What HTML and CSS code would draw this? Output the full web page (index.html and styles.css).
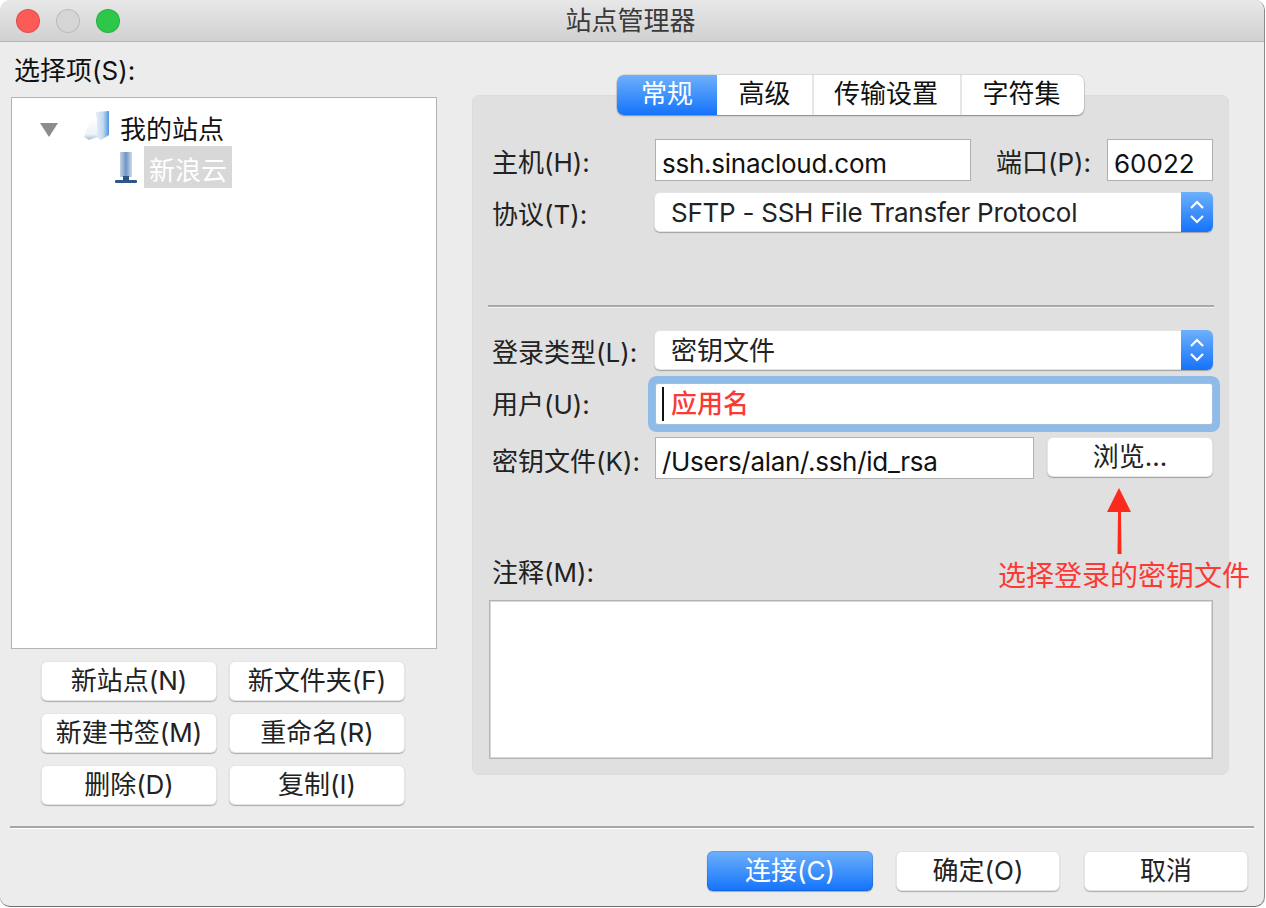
FILE: index.html
```html
<!DOCTYPE html>
<html lang="zh-CN">
<head>
<meta charset="utf-8">
<title>站点管理器</title>
<link rel="stylesheet" href="styles.css">
</head>
<body>
<div class="window">
  <header class="titlebar">
    <div class="lights"><i class="light red"></i><i class="light grey"></i><i class="light green"></i></div>
    <div class="title">站点管理器</div>
  </header>
  <div class="content">
    <section class="left">
      <div class="select-label">选择项(S):</div>
      <div class="tree">
        <div class="tree-row root">
          <svg class="twist" width="18" height="14" viewBox="0 0 18 14"><path d="M0 0H18L9 14Z" fill="#8c8c8c"/></svg>
          <svg class="folder" width="30" height="32" viewBox="0 0 30 32">
            <defs>
              <linearGradient id="fg" x1="0" y1="0" x2="1" y2="0"><stop offset="0" stop-color="#e6eff8"/><stop offset=".55" stop-color="#c3d9f0"/><stop offset="1" stop-color="#4f94dc"/></linearGradient>
              <linearGradient id="ff" x1="0" y1="0" x2="0" y2="1"><stop offset="0" stop-color="#ffffff"/><stop offset=".75" stop-color="#eef3f8"/><stop offset="1" stop-color="#a9bccf"/></linearGradient>
              <filter id="soft" x="-20%" y="-20%" width="140%" height="140%"><feGaussianBlur stdDeviation=".7"/></filter>
            </defs>
            <g filter="url(#soft)">
              <path d="M14 2 27 1V25L19 30 14 27Z" fill="url(#fg)"/>
              <path d="M2 27 8 10 15 7V27L7 30Z" fill="url(#ff)"/>
            </g>
          </svg>
          <span class="node">我的站点</span>
        </div>
        <div class="tree-row child">
          <svg class="server" width="24" height="34" viewBox="0 0 24 34">
            <defs>
              <linearGradient id="sg" x1="0" y1="0" x2="1" y2="0"><stop offset="0" stop-color="#c4d3e6"/><stop offset=".5" stop-color="#6f95c4"/><stop offset="1" stop-color="#d0dcea"/></linearGradient>
              <filter id="soft2" x="-20%" y="-20%" width="140%" height="140%"><feGaussianBlur stdDeviation=".6"/></filter>
            </defs>
            <g filter="url(#soft2)">
              <rect x="6" y="1" width="12" height="25" fill="url(#sg)"/>
              <rect x="9" y="25" width="6" height="4" fill="#2f5384"/>
              <rect x="1" y="29" width="22" height="3" rx="1" fill="#2f5788"/>
            </g>
          </svg>
          <span class="node selected">新浪云</span>
        </div>
      </div>
      <div class="tree-actions">
        <button class="btn">新站点(N)</button>
        <button class="btn">新文件夹(F)</button>
        <button class="btn">新建书签(M)</button>
        <button class="btn">重命名(R)</button>
        <button class="btn">删除(D)</button>
        <button class="btn">复制(I)</button>
      </div>
    </section>
    <section class="panel">
      <nav class="tabs">
        <div class="tab tab-active">常规</div>
        <div class="tab tab-2">高级</div>
        <div class="tab tab-3">传输设置</div>
        <div class="tab tab-4">字符集</div>
      </nav>
      <div class="row row-host">
        <label class="field-label">主机(H):</label>
        <div class="input host">ssh.sinacloud.com</div>
        <label class="port-label">端口(P):</label>
        <div class="input port">60022</div>
      </div>
      <div class="row row-proto">
        <label class="field-label">协议(T):</label>
        <div class="select">
          <span class="select-text proto-text">SFTP - SSH File Transfer Protocol</span>
          <span class="stepper"><svg width="18" height="28" viewBox="0 0 18 28"><path d="M3 10 9 4l6 6M3 18l6 6 6-6" fill="none" stroke="#fff" stroke-width="2.2"/></svg></span>
        </div>
      </div>
      <hr class="rule">
      <div class="row row-login">
        <label class="field-label">登录类型(L):</label>
        <div class="select">
          <span class="select-text">密钥文件</span>
          <span class="stepper"><svg width="18" height="28" viewBox="0 0 18 28"><path d="M3 10 9 4l6 6M3 18l6 6 6-6" fill="none" stroke="#fff" stroke-width="2.2"/></svg></span>
        </div>
      </div>
      <div class="row row-user">
        <label class="field-label user-label">用户(U):</label>
        <div class="input user"><i class="caret"></i><span class="user-text">应用名</span></div>
      </div>
      <div class="row row-key">
        <label class="field-label key-label">密钥文件(K):</label>
        <div class="input keyfile">/Users/alan/.ssh/id_rsa</div>
        <button class="btn browse">浏览...</button>
      </div>
      <div class="note-label">注释(M):</div>
      <div class="note"></div>
      <svg class="arrow" width="26" height="66" viewBox="0 0 26 66"><path d="M13 0 25 24H15L15.500 66H11.500L12 24H1Z" fill="#fb2a1f"/></svg>
      <div class="callout">选择登录的密钥文件</div>
    </section>
  </div>
  <footer class="footer">
    <hr class="footer-rule">
    <div class="footer-actions">
      <button class="btn btn-primary">连接(C)</button>
      <button class="btn btn-ok">确定(O)</button>
      <button class="btn btn-cancel">取消</button>
    </div>
  </footer>
</div>
</body>
</html>
```
FILE: styles.css
```css
* { box-sizing: border-box; }
html, body { margin: 0; padding: 0; background: #fff; }
body { width: 1266px; height: 908px; overflow: hidden; font-family: Inter, "Noto Sans CJK SC", sans-serif; font-size: 26px; color: #222; }
.window { width: 1265px; height: 907px; background: #ececec; border-right: 1px solid #8a8a8a; border-bottom: 1px solid #6e6e6e; border-radius: 10px; display: flex; flex-direction: column; overflow: hidden; }
.titlebar { height: 42px; flex: none; background: linear-gradient(#e9e8e9, #d2d1d2); border-bottom: 1px solid #b4b4b4; display: flex; align-items: center; position: relative; }
.lights { display: flex; gap: 16px; padding-left: 16px; }
.light { display: block; width: 24px; height: 24px; border-radius: 50%; border: 1px solid rgba(0,0,0,.12); }
.red { background: #fc5b57; }
.grey { background: #d6d5d5; }
.green { background: #2dc84a; }
.title { position: absolute; left: 0; right: 3px; top: 0; text-align: center; line-height: 41px; color: #3a3a3a; }

.content { display: flex; height: 784px; flex: none; }
.left { width: 472px; flex: none; padding-left: 11px; }
.select-label { height: 55px; line-height: 58px; padding-left: 3px; color: #111; }
.tree { width: 426px; height: 552px; background: #fff; border: 1px solid #b4b4b4; padding-top: 10px; }
.tree-row { display: flex; align-items: center; }
.root { height: 38px; padding-left: 28px; }
.twist { margin-top: 6px; }
.folder { margin: -2px 8px 0 24px; }
.child { height: 42px; padding-left: 102px; }
.server { margin-top: 1px; margin-right: 6px; }
.node { color: #111; line-height: 42px; }
.root .node { margin-top: 6px; }
.selected { background: #d8d8d8; color: #fff; padding: 0 5px; height: 42px; line-height: 50px; }
.tree-actions { display: grid; grid-template-columns: 176px 176px; grid-auto-rows: 40px; gap: 12px; padding: 12px 0 0 30px; }

.btn { font: inherit; color: #222; background: #fff; border: 0; border-radius: 6px; padding: 0; height: 40px; line-height: 38px; box-shadow: inset 0 0 0 1px rgba(0,0,0,.1), 0 1px 1px rgba(0,0,0,.28); }

.panel { position: relative; width: 757px; height: 680px; margin-top: 53px; background: #e0e0e0; border-radius: 8px; padding: 0 16px 0 20px; box-shadow: inset 0 0 0 1px #dcdcdc; }
.tabs { display: flex; height: 40px; width: 467px; margin: -20px 0 0 125px; background: #fff; border-radius: 7px; box-shadow: 0 0 0 .5px rgba(0,0,0,.15), 0 1px 1.5px rgba(0,0,0,.35); overflow: hidden; }
.tab { text-align: center; line-height: 38px; color: #111; border-left: 2px solid #e6e6e6; }
.tab-active { width: 100px; border-left: 0; color: #fff; background: linear-gradient(#6eb0fb, #1473fb); }
.tab-2 { width: 95px; border-left: 0; }
.tab-3 { width: 148px; padding-right: 2px; }
.tab-4 { width: 124px; padding-right: 3px; }

.row { display: flex; align-items: center; }
.field-label { width: 163px; flex: none; white-space: nowrap; color: #222; }
.input { background: #fff; border: 1px solid #b0b0b0; height: 42px; line-height: 47px; padding-left: 6px; color: #111; white-space: nowrap; }
.row-host { margin-top: 24px; }
.host { width: 316px; letter-spacing: -.25px; }
.port-label { margin-left: 25px; width: 111px; flex: none; white-space: nowrap; }
.port { width: 106px; }
.row-proto { margin-top: 11px; }
.select { flex: 1; margin-left: -1px; height: 40px; background: #fff; border-radius: 6px; display: flex; justify-content: space-between; overflow: hidden; box-shadow: inset 0 0 0 1px rgba(0,0,0,.1), 0 1px 1px rgba(0,0,0,.28); }
.select-text { padding-left: 17px; line-height: 42px; color: #222; }
.proto-text { letter-spacing: -.25px; }
.stepper { width: 32px; background: linear-gradient(#6eb0fb, #1473fb); display: flex; align-items: center; justify-content: center; }
.rule { height: 3px; margin: 73px -1px 0 -4px; border: 0; background: #a9a9a9; border-bottom: 1px solid #f4f4f4; }
.row-login { margin-top: 22px; }
.row-user { margin-top: 13px; }
.user-label { margin-top: -4px; }
.key-label { margin-top: 4px; }
.user { flex: 1; display: flex; align-items: center; padding-left: 6px; box-shadow: 0 0 0 7px #8fbbe9; border-radius: 3px; border-color: #9fbddd; }
.caret { display: block; width: 2px; height: 34px; background: #111; }
.user-text { margin-left: 7px; color: #fb3a35; font-weight: 500; line-height: 42px; }
.row-key { margin-top: 12px; align-items: flex-start; }
.keyfile { width: 379px; padding-left: 6px; letter-spacing: -.3px; }
.browse { width: 166px; margin-left: 13px; }
.note-label { margin-top: 73px; line-height: 42px; height: 42px; color: #222; }
.note { height: 159px; width: 724px; margin: 6px 0 0 -3px; background: #fff; border: 1px solid #b4b4b4; box-shadow: inset 0 0 0 1px #d8d8d8; }
.arrow { position: absolute; left: 634px; top: 393px; }
.callout { position: absolute; left: 526px; top: 460px; white-space: nowrap; line-height: 42px; font-size: 28px; color: #fb3a35; }

.footer { flex: 1; }
.footer-rule { height: 3px; margin: 0 10px 0 10px; border: 0; background: #a6a6a6; border-bottom: 1px solid #fff; }
.footer-actions { display: flex; justify-content: flex-end; padding: 22px 16px 0 0; }
.btn-primary { width: 166px; color: #fff; background: linear-gradient(#6eb0fb, #1473fb); }
.btn-ok { width: 164px; margin-left: 23px; }
.btn-cancel { width: 164px; margin-left: 24px; }
```
